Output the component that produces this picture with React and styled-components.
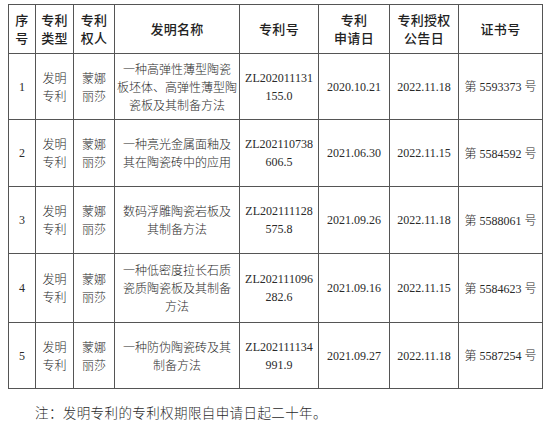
import React from "react";
import styled, { createGlobalStyle } from "styled-components";

const GlobalStyle = createGlobalStyle`
  body {
    margin: 0;
    background: #fff;
  }
`;

const Page = styled.div`
  width: 550px;
  height: 422px;
  padding: 4px 0 0 8px;
  box-sizing: border-box;
  font-family: "Liberation Serif", "Noto Sans CJK SC", serif;
  color: #2a2a2a;
`;

const Table = styled.table`
  border-collapse: collapse;
  table-layout: fixed;
  width: 534px;
`;

const HeadCell = styled.th`
  border: 1px solid #555;
  height: 48px;
  padding: 0;
  font-family: "Noto Sans CJK SC", sans-serif;
  font-weight: 500;
  font-size: 13px;
  line-height: 18px;
  letter-spacing: 0.3px;
  color: #222;
  text-align: center;
  vertical-align: middle;
`;

const Cell = styled.td`
  border: 1px solid #555;
  height: ${({ $h }) => $h}px;
  padding: 0;
  font-family: ${({ $cjk }) =>
    $cjk ? '"Noto Sans CJK SC", sans-serif' : '"Liberation Serif", "Noto Sans CJK SC", serif'};
  font-weight: ${({ $cjk }) => ($cjk ? 300 : 400)};
  font-size: 12px;
  line-height: 18px;
  text-align: center;
  vertical-align: middle;
  white-space: nowrap;
`;

const Han = styled.span`
  font-family: "Noto Sans CJK SC", sans-serif;
  font-weight: 300;
`;

const Note = styled.p`
  margin: 13px 0 0;
  padding-left: 27px;
  font-family: "Noto Sans CJK SC", sans-serif;
  font-weight: 300;
  font-size: 13.5px;
  letter-spacing: 0.4px;
  color: #2a2a2a;
`;

const widths = [27, 38, 41, 125, 79, 71, 69, 84];

const headers = [
  ["序", "号"],
  ["专利", "类型"],
  ["专利", "权人"],
  ["发明名称"],
  ["专利号"],
  ["专利", "申请日"],
  ["专利授权", "公告日"],
  ["证书号"],
];

const rows = [
  {
    h: 65,
    name: ["一种高弹性薄型陶瓷", "板坯体、高弹性薄型陶", "瓷板及其制备方法"],
    no: ["ZL202011131", "155.0"],
    apply: "2020.10.21",
    grant: "2022.11.18",
    cert: "5593373",
  },
  {
    h: 66,
    name: ["一种亮光金属面釉及", "其在陶瓷砖中的应用"],
    no: ["ZL202110738", "606.5"],
    apply: "2021.06.30",
    grant: "2022.11.15",
    cert: "5584592",
  },
  {
    h: 66,
    name: ["数码浮雕陶瓷岩板及", "其制备方法"],
    no: ["ZL202111128", "575.8"],
    apply: "2021.09.26",
    grant: "2022.11.18",
    cert: "5588061",
  },
  {
    h: 68,
    name: ["一种低密度拉长石质", "瓷质陶瓷板及其制备", "方法"],
    no: ["ZL202111096", "282.6"],
    apply: "2021.09.16",
    grant: "2022.11.15",
    cert: "5584623",
  },
  {
    h: 65,
    name: ["一种防伪陶瓷砖及其", "制备方法"],
    no: ["ZL202111134", "991.9"],
    apply: "2021.09.27",
    grant: "2022.11.18",
    cert: "5587254",
  },
];

const Lines = ({ items }) =>
  items.map((t, i) => (
    <React.Fragment key={i}>
      {i > 0 && <br />}
      {t}
    </React.Fragment>
  ));

export default function App() {
  return (
    <>
      <GlobalStyle />
      <Page>
        <Table>
          <colgroup>
            {widths.map((w, i) => (
              <col key={i} style={{ width: w }} />
            ))}
          </colgroup>
          <thead>
            <tr>
              {headers.map((h, i) => (
                <HeadCell key={i}>
                  <Lines items={h} />
                </HeadCell>
              ))}
            </tr>
          </thead>
          <tbody>
            {rows.map((r, i) => (
              <tr key={i}>
                <Cell $h={r.h}>{i + 1}</Cell>
                <Cell $h={r.h} $cjk>
                  发明
                  <br />
                  专利
                </Cell>
                <Cell $h={r.h} $cjk>
                  蒙娜
                  <br />
                  丽莎
                </Cell>
                <Cell $h={r.h} $cjk>
                  <Lines items={r.name} />
                </Cell>
                <Cell $h={r.h}>
                  <Lines items={r.no} />
                </Cell>
                <Cell $h={r.h}>{r.apply}</Cell>
                <Cell $h={r.h}>{r.grant}</Cell>
                <Cell $h={r.h}>
                  <Han>第</Han> {r.cert} <Han>号</Han>
                </Cell>
              </tr>
            ))}
          </tbody>
        </Table>
        <Note>注：发明专利的专利权期限自申请日起二十年。</Note>
      </Page>
    </>
  );
}
